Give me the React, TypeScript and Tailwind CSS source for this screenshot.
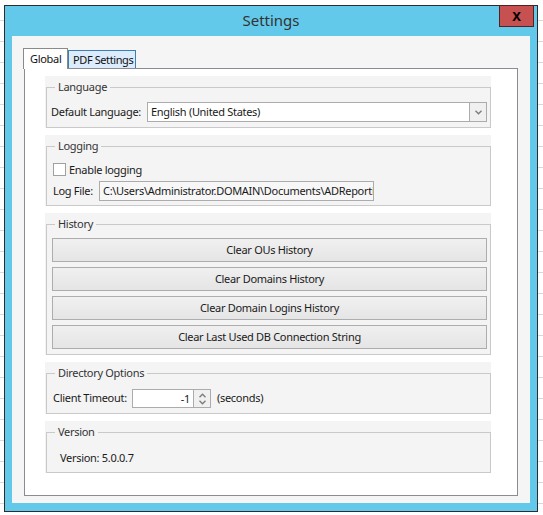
import React from 'react'

const font = { fontFamily: '"Noto Sans", "Open Sans", sans-serif' }

function Group({ title, children, className = '' }: { title: string; children: React.ReactNode; className?: string }) {
  return (
    <div className="bg-[#f4f4f4] pt-[11px] pl-[1px]">
      <div className={`relative border border-[#c9c9c9] ${className}`}>
        <span className="absolute top-[-9px] left-[8px] bg-[#f4f4f4] px-[3px] leading-[16px] text-[#333]">
          {title}
        </span>
        {children}
      </div>
    </div>
  )
}

function Chevron({ up = false }: { up?: boolean }) {
  return (
    <svg width="7" height="5" viewBox="0 0 7 5" className={up ? 'rotate-180' : ''}>
      <path d="M0.5 0.8 L3.5 3.8 L6.5 0.8" fill="none" stroke="#7a7a7a" strokeWidth="1.3" />
    </svg>
  )
}

function HistoryButton({ label }: { label: string }) {
  return (
    <button className="h-[24px] w-full border border-[#adadad] bg-[linear-gradient(to_bottom,#f0f0f0,#e5e5e5)] leading-[22px] text-[#1a1a1a]">
      {label}
    </button>
  )
}

export default function App() {
  return (
    <div
      className="relative w-[543px] h-[515px] overflow-hidden bg-white bg-[repeating-linear-gradient(to_bottom,#ffffff_0px,#ffffff_20px,#d9d9d9_20px,#d9d9d9_21px)] pt-[5px] pl-[4px] text-[11px] tracking-[-0.3px] whitespace-nowrap"
      style={font}
    >
      <div className="w-[534px] h-[507px] border border-[#2d2d2d] bg-[#63c9ea] flex flex-col">
        {/* title bar */}
        <div className="relative h-[30px] shrink-0 flex items-center justify-center">
          <span className="text-[15px] tracking-normal text-[#333] leading-none mt-[-2px]">Settings</span>
          <div className="absolute top-[-1px] right-[3px] w-[35px] h-[22px] border border-[#4e2323] bg-[#c75050] flex items-center justify-center">
            <span className="text-[13px] font-bold text-black leading-none">X</span>
          </div>
        </div>

        {/* client */}
        <div className="mx-[7px] h-[467px] shrink-0 bg-[#f5f5f5] pt-[12px] pl-[12px] pr-[12px] pb-[7px] flex flex-col">
          <div className="flex h-[20px] shrink-0 items-start">
            <div className="relative z-10 ml-[-1px] h-[21px] w-[45px] border-l border-t border-r border-[#8a8a8a] bg-white pl-[6px] leading-[19px] text-[#111]">
              Global
            </div>
            <div className="mt-[2px] h-[18px] w-[68px] border border-b-0 border-[#3c7fb1] bg-[#dcecfc] pl-[4px] leading-[17px] tracking-[-0.4px] text-[#111] overflow-hidden">
              PDF Settings
            </div>
          </div>

          <div className="flex-1 border border-[#898c95] bg-white pt-[7px] pl-[20px] pr-[26px] flex flex-col gap-[7px]">
            <Group title="Language" className="pt-[14px] pb-[5px] pl-[4px] pr-[3px]">
              <div className="flex items-center">
                <span className="w-[96px] text-[#1a1a1a]">Default Language:</span>
                <div className="flex-1 h-[20px] border border-[#acacac] bg-white flex">
                  <span className="flex-1 pl-[3px] leading-[18px] text-[#1a1a1a]">English (United States)</span>
                  <div className="w-[17px] border-l border-[#acacac] bg-[#f0f0f0] flex items-center justify-center">
                    <Chevron />
                  </div>
                </div>
              </div>
            </Group>

            <Group title="Logging" className="pt-[16px] pb-[4px] pl-[6px]">
              <div className="flex items-center h-[13px]">
                <div className="w-[13px] h-[13px] border border-[#a0a0a0] bg-white" />
                <span className="ml-[3px] text-[#1a1a1a] leading-[16px]">Enable logging</span>
              </div>
              <div className="mt-[5px] flex items-center">
                <span className="w-[46px] text-[#1a1a1a]">Log File:</span>
                <div className="w-[275px] h-[20px] border border-[#acacac] bg-[#f7f7f7] overflow-hidden pl-[3px] leading-[18px] text-[#1a1a1a]">
                  C:\Users\Administrator.DOMAIN\Documents\ADReporting
                </div>
              </div>
            </Group>

            <Group title="History" className="pt-[13px] pb-[5px] pl-[5px] pr-[3px] flex flex-col gap-[5px]">
              <HistoryButton label="Clear OUs History" />
              <HistoryButton label="Clear Domains History" />
              <HistoryButton label="Clear Domain Logins History" />
              <HistoryButton label="Clear Last Used DB Connection String" />
            </Group>

            <Group title="Directory Options" className="pt-[15px] pb-[5px] pl-[6px]">
              <div className="flex items-center">
                <span className="w-[79px] text-[#1a1a1a]">Client Timeout:</span>
                <div className="w-[79px] h-[19px] border border-[#acacac] bg-white flex">
                  <span className="flex-1 text-right pr-[3px] leading-[17px] text-[#1a1a1a]">-1</span>
                  <div className="w-[17px] border-l border-[#acacac] bg-[#f0f0f0] flex flex-col items-center justify-center gap-[2px]">
                    <Chevron up />
                    <Chevron />
                  </div>
                </div>
                <span className="ml-[6px] text-[#1a1a1a]">(seconds)</span>
              </div>
            </Group>

            <Group title="Version" className="pt-[17px] pb-[6px] pl-[13px]">
              <div className="leading-[16px] text-[#1a1a1a]">Version: 5.0.0.7</div>
            </Group>
          </div>
        </div>
      </div>
    </div>
  )
}
